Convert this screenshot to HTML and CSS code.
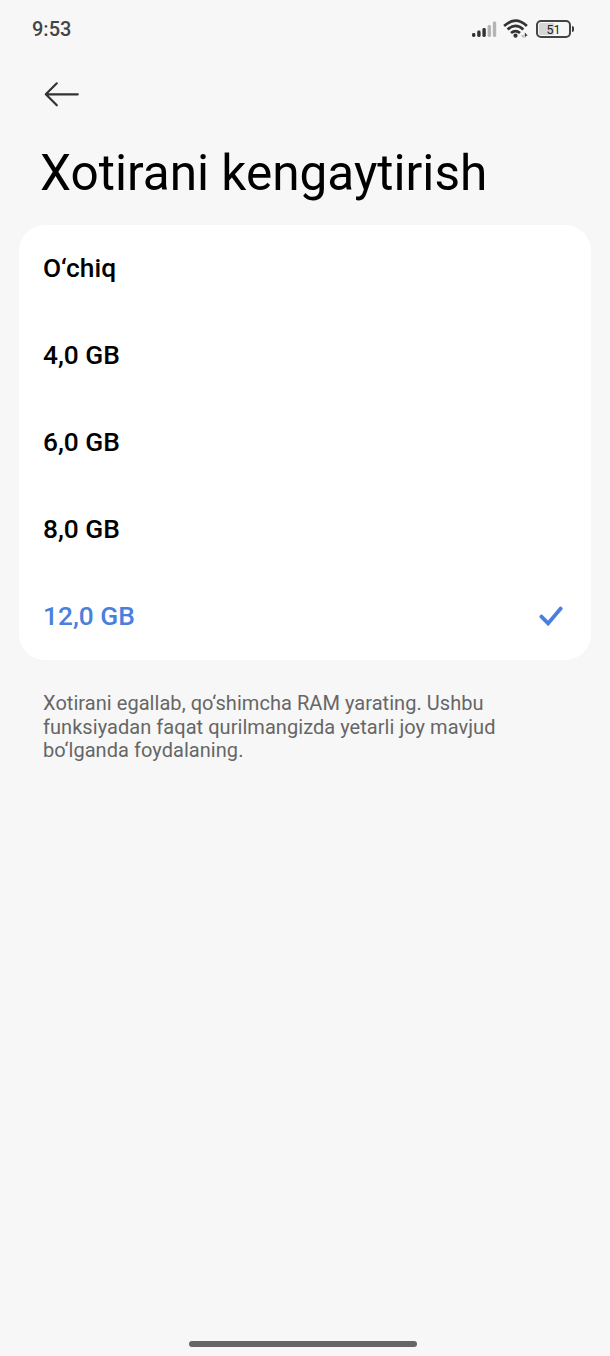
FILE: index.html
```
<!DOCTYPE html>
<html lang="uz">
<head>
    <meta charset="UTF-8">
    <title>Xotirani kengaytirish</title>
    <link rel="stylesheet" href="styles.css">
</head>
<body>
<div id="wrap">
    <div class="status">
        <span class="time">9:53</span>
        <div class="status_icons">
            <svg class="signal" width="25" height="16" viewBox="0 0 25 16">
                <rect x="0" y="12" width="3.4" height="4" rx="1.4" fill="#333"/>
                <rect x="5.2" y="9.5" width="3.4" height="6.5" rx="1.4" fill="#333"/>
                <rect x="10.4" y="7" width="3.4" height="9" rx="1.4" fill="#333"/>
                <rect x="15.6" y="4" width="3.4" height="12" rx="1.4" fill="#b4b4b4"/>
                <rect x="20.8" y="0.5" width="3.4" height="15.5" rx="1.4" fill="#b4b4b4"/>
            </svg>
            <svg class="wifi" width="26" height="20" viewBox="0 0 26 20">
                <g fill="none" stroke="#333" stroke-width="2.7">
                    <path d="M1.1 7.1Q12.5 -3.7 23.9 7.1"/>
                    <path d="M4.6 10.6Q12.5 3.3 20.4 10.6"/>
                    <path d="M8 14Q12.5 10.1 17 14"/>
                </g>
                <circle cx="12.5" cy="16.7" r="2.1" fill="#333"/>
                <path d="M20.6 13.6v5.4l-2.5-2.7h2.5z" fill="#999"/>
                <path d="M21.8 19v-5.4l3 3.2h-1.8z" fill="#333"/>
            </svg>
            <div class="battery"><span>51</span></div>
        </div>
    </div>
    <a class="back" href="#" aria-label="Orqaga">
        <svg width="36" height="26" viewBox="0 0 36 26">
            <path d="M12.8 2.3L1.8 13.3l11 11M1.8 13.3h32" fill="none" stroke="#333" stroke-width="2.2" stroke-linecap="round" stroke-linejoin="round"/>
        </svg>
    </a>
    <h1>Xotirani kengaytirish</h1>
    <ul class="list">
        <li>O‘chiq</li>
        <li>4,0 GB</li>
        <li>6,0 GB</li>
        <li>8,0 GB</li>
        <li class="on">
            12,0 GB
            <svg width="24" height="20" viewBox="0 0 24 20">
                <path d="M2.4 10.6l6.7 6.8L21.7 2.6" fill="none" stroke="#4a7fdc" stroke-width="3.8" stroke-linecap="round"/>
            </svg>
        </li>
    </ul>
    <p class="note">Xotirani egallab, qo‘shimcha RAM yarating. Ushbu<br>funksiyadan faqat qurilmangizda yetarli joy mavjud<br>bo‘lganda foydalaning.</p>
    <div class="home_bar"></div>
</div>
</body>
</html>
```
FILE: styles.css
```
body, div, ul, li, a, h1, p, span {
    margin: 0;
    padding: 0;
}

ul, li {
    list-style-type: none;
}

svg {
    display: block;
}

body {
    background-color: #f7f7f7;
    font-family: Roboto, "Liberation Sans", sans-serif;
    color: #000;
}

#wrap {
    display: flex;
    flex-direction: column;
    box-sizing: border-box;
    height: 1356px;
    padding-bottom: 9px;
}

.status {
    display: flex;
    justify-content: space-between;
    align-items: center;
    height: 58px;
    padding: 0 35px 0 32px;
}

.time {
    font-size: 20px;
    font-weight: 500;
    color: #444;
}

.status_icons {
    display: flex;
    align-items: center;
}

.wifi {
    margin-left: 6px;
}

.battery {
    position: relative;
    box-sizing: border-box;
    width: 35px;
    height: 18px;
    margin: 0 4px 0 7px;
    border: 2px solid #444;
    border-radius: 5px;
    background: linear-gradient(to right, #d6d6d6 51%, #f7f7f7 51%) content-box;
    padding: 1px;
    text-align: center;
    line-height: 13px;
    font-size: 12.5px;
    color: #222;
}

.battery:after {
    content: "";
    position: absolute;
    top: 4px;
    right: -5px;
    width: 2px;
    height: 6px;
    border-radius: 0 2px 2px 0;
    background-color: #3a3a3a;
}

.back {
    width: 36px;
    margin: 23px 0 0 44px;
}

h1 {
    margin: 36px 0 0 40px;
    height: 82px;
    line-height: 60px;
    font-size: 49.5px;
    font-weight: 400;
    white-space: nowrap;
}

.list {
    margin: 0 19px;
    border-radius: 26px;
    background-color: #fff;
}

.list li {
    display: flex;
    justify-content: space-between;
    align-items: center;
    box-sizing: border-box;
    height: 87px;
    padding: 0 28px 1px 24px;
    font-size: 26.3px;
    font-weight: 500;
}

.list .on {
    color: #4a7fdc;
}

.note {
    margin: 32px 43px 0;
    line-height: 23.5px;
    font-size: 20px;
    letter-spacing: .05px;
    color: #666;
    white-space: nowrap;
}

.home_bar {
    width: 228px;
    height: 6px;
    margin: auto 0 0 189px;
    border-radius: 3px;
    background-color: #666;
}
```
